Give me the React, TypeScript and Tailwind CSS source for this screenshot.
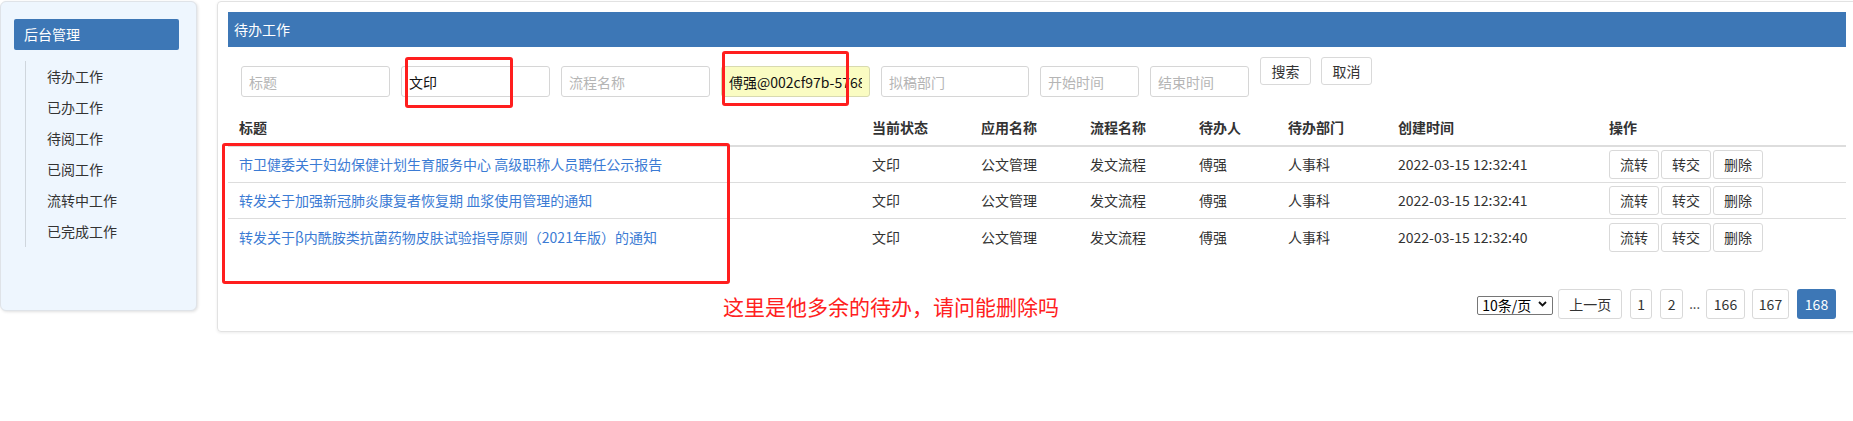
import React from "react";

const font = { fontFamily: '"Noto Sans CJK SC", "Noto Sans", sans-serif' };

const menu = ["待办工作", "已办工作", "待阅工作", "已阅工作", "流转中工作", "已完成工作"];

const rows = [
  { title: "市卫健委关于妇幼保健计划生育服务中心 高级职称人员聘任公示报告", time: "2022-03-15 12:32:41" },
  { title: "转发关于加强新冠肺炎康复者恢复期 血浆使用管理的通知", time: "2022-03-15 12:32:41" },
  { title: "转发关于β内酰胺类抗菌药物皮肤试验指导原则（2021年版）的通知", time: "2022-03-15 12:32:40" },
];

const grid = "grid grid-cols-[633px_109px_109px_109px_89px_110px_211px_1fr] items-center";

function Input({ w, placeholder, value, yellow }: { w: string; placeholder?: string; value?: string; yellow?: boolean }) {
  return (
    <input
      readOnly
      placeholder={placeholder}
      defaultValue={value}
      className={`${w} mt-[9px] h-[31px] shrink-0 rounded-[3px] border px-[7px] text-[14px] text-[#111] outline-none placeholder:text-[#b5b5b5] ${
        yellow ? "border-[#d8dab0] bg-[#fafcc2]" : "border-[#d6d6d6] bg-white"
      }`}
      style={font}
    />
  );
}

function Btn({ children, cls = "" }: { children: React.ReactNode; cls?: string }) {
  return (
    <div className={`flex items-center justify-center rounded-[3px] border border-[#d9d9d9] bg-white text-[14px] text-[#333] ${cls}`}>
      {children}
    </div>
  );
}

export default function App() {
  return (
    <div className="relative h-[421px] w-[1853px] overflow-hidden bg-white text-[#333]" style={font}>
      <div className="flex items-start">
        {/* Sidebar */}
        <div className="mt-[1px] h-[310px] w-[197px] shrink-0 rounded-[6px] border border-[#dfe3e8] bg-[#eef6fe] pl-[13px] pt-[17px] shadow-[1px_1px_3px_rgba(0,0,0,0.12)]">
          <div className="flex h-[31px] w-[165px] items-center rounded-[2px] bg-[#3d77b6] pl-[10px] text-[14px] text-white">
            后台管理
          </div>
          <div className="ml-[11px] mt-[11px] border-l border-[#cfd6dd]">
            {menu.map((m) => (
              <div key={m} className="flex h-[31px] items-center pl-[21px] text-[14px] text-[#333]">
                {m}
              </div>
            ))}
          </div>
        </div>

        {/* Main panel */}
        <div className="ml-[20px] mt-[1px] w-[1640px] shrink-0 rounded-[4px] border border-[#e2e2e2] p-[10px] pb-[12px] shadow-[0_1px_3px_rgba(0,0,0,0.08)]">
          <div className="flex h-[35px] items-center bg-[#3d77b6] pl-[6px] text-[14px] text-white">待办工作</div>

          {/* Filters */}
          <div className="mt-[10px] flex items-start gap-[11px] pl-[13px]">
            <Input w="w-[149px]" placeholder="标题" />
            <Input w="w-[149px]" value="文印" />
            <Input w="w-[149px]" placeholder="流程名称" />
            <Input w="w-[149px]" value="傅强@002cf97b-5768-4e21" yellow />
            <Input w="w-[148px]" placeholder="拟稿部门" />
            <Input w="w-[99px]" placeholder="开始时间" />
            <Input w="w-[99px]" placeholder="结束时间" />
            <Btn cls="h-[28px] w-[51px]">搜索</Btn>
            <Btn cls="-ml-[1px] h-[28px] w-[51px]">取消</Btn>
          </div>

          {/* Table */}
          <div className="mt-[13px]">
            <div className={`${grid} h-[37px] border-b-2 border-[#dddddd] text-[14px] font-bold text-[#333]`}>
              {["标题", "当前状态", "应用名称", "流程名称", "待办人", "待办部门", "创建时间", "操作"].map((h) => (
                <div key={h} className="pl-[11px]">
                  {h}
                </div>
              ))}
            </div>
            {rows.map((r, i) => (
              <div
                key={i}
                className={`${grid} h-[36px] text-[14px] ${i < rows.length - 1 ? "border-b border-[#dddddd]" : ""}`}
              >
                <div className="whitespace-nowrap pl-[11px] text-[#3b7bd4]">{r.title}</div>
                <div className="pl-[11px]">文印</div>
                <div className="pl-[11px]">公文管理</div>
                <div className="pl-[11px]">发文流程</div>
                <div className="pl-[11px]">傅强</div>
                <div className="pl-[11px]">人事科</div>
                <div className="whitespace-nowrap pl-[11px]">{r.time}</div>
                <div className="flex gap-[2px] pl-[11px]">
                  <Btn cls="h-[29px] w-[50px]">流转</Btn>
                  <Btn cls="h-[29px] w-[50px]">转交</Btn>
                  <Btn cls="h-[29px] w-[50px]">删除</Btn>
                </div>
              </div>
            ))}
          </div>

          {/* Pagination */}
          <div className="mt-[34px] flex h-[30px] items-center justify-end pr-[10px] text-[14px]">
            <div className="relative mr-[5px] h-[19px] w-[76px]">
              <select
                className="h-[19px] w-[76px] appearance-none rounded-[2px] border border-[#767676] bg-white pl-[4px] text-[14px] leading-[17px] text-black outline-none"
                style={font}
                defaultValue="10"
              >
                <option value="10">10条/页</option>
              </select>
              <svg className="pointer-events-none absolute right-[6px] top-[6px]" width="9" height="6" viewBox="0 0 9 6">
                <path d="M1 1l3.5 3.5L8 1" fill="none" stroke="#111" strokeWidth="1.8" />
              </svg>
            </div>
            <Btn cls="h-[30px] w-[64px]">上一页</Btn>
            <Btn cls="ml-[8px] h-[30px] w-[22px]">1</Btn>
            <Btn cls="ml-[8px] h-[30px] w-[23px]">2</Btn>
            <div className="mx-[6px] text-[13px] text-[#333]">...</div>
            <Btn cls="h-[30px] w-[39px]">166</Btn>
            <Btn cls="ml-[7px] h-[30px] w-[37px]">167</Btn>
            <div className="ml-[8px] flex h-[30px] w-[39px] items-center justify-center rounded-[3px] bg-[#3d77b6] text-[14px] text-white">
              168
            </div>
          </div>
        </div>
      </div>

      {/* Red annotations (overlay) */}
      <div className="absolute left-[405px] top-[57px] h-[51px] w-[108px] rounded-[3px] border-[3px] border-[#ff1e1e]" />
      <div className="absolute left-[722px] top-[51px] h-[55px] w-[127px] rounded-[3px] border-[3px] border-[#ff1e1e]" />
      <div className="absolute left-[222px] top-[143px] h-[141px] w-[508px] rounded-[3px] border-[3px] border-[#ff1e1e]" />
      <div className="absolute left-[723px] top-[292px] whitespace-nowrap text-[21px] leading-[29px] text-[#ff2020]">
        这里是他多余的待办，请问能删除吗
      </div>
    </div>
  );
}
